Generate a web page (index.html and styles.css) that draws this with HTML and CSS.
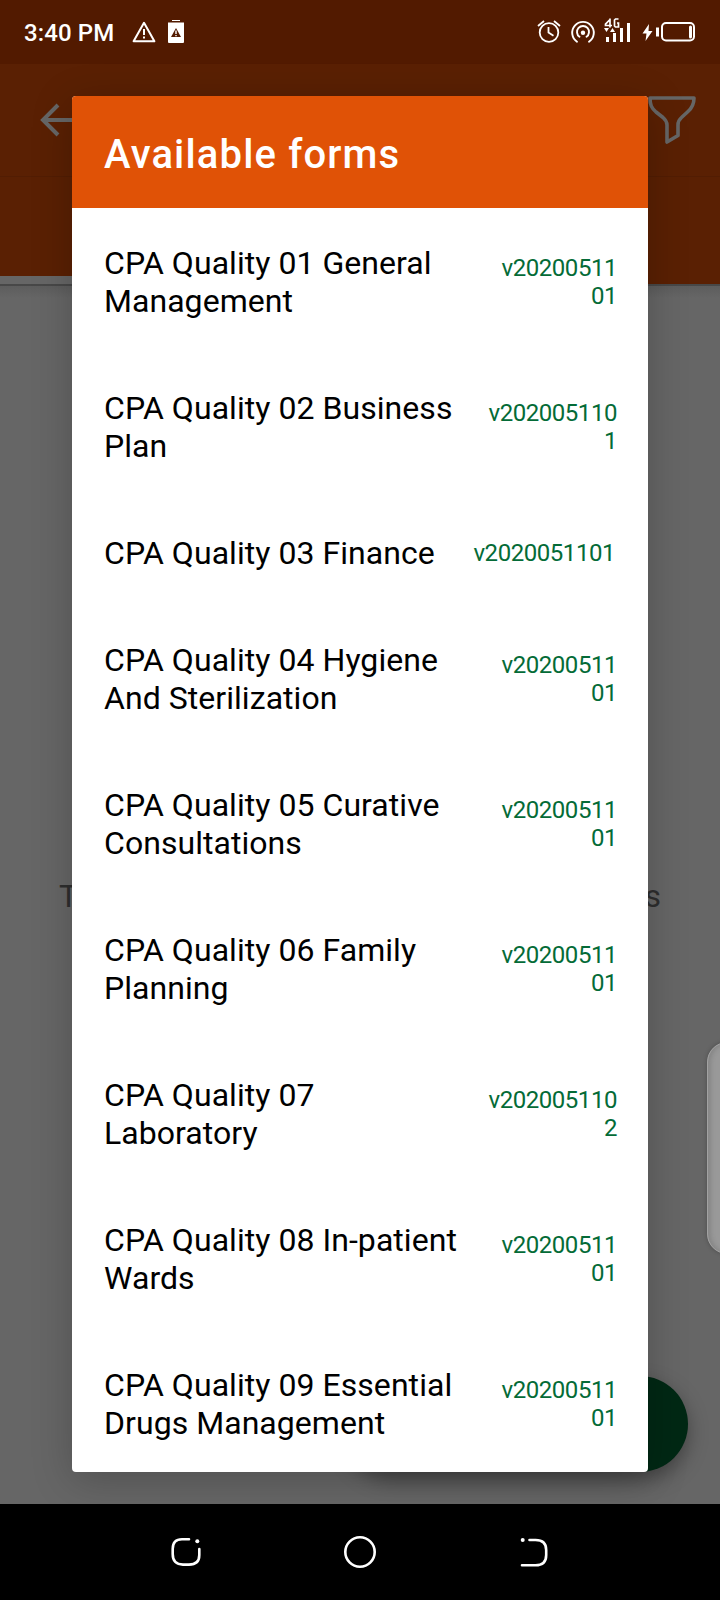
FILE: index.html
```html
<!DOCTYPE html>
<html lang="en">
<head>
<meta charset="utf-8">
<title>Available forms</title>
<link rel="stylesheet" href="styles.css">
</head>
<body>
<div class="screen">
  <header class="status">
    <span class="clock">3:40 PM</span>
    <svg class="warn" width="24" height="22" viewBox="0 0 24 22"><path d="M12 1.8 22.4 20.3H1.6Z" fill="none" stroke="#fff" stroke-width="2" stroke-linejoin="round"/><path d="M11 8h2v6h-2zM11 15.5h2v2h-2z" fill="#fff"/></svg>
    <svg class="batwarn" width="16" height="23" viewBox="0 0 16 23"><path d="M4 0h8v1H4zM0 2.500h16V22a1 1 0 0 1-1 1H1a1 1 0 0 1-1-1z" fill="#fff"/><path d="M8 8 13 17H3Z" fill="#521a00"/><path d="M7.300 10.500h1.400v3.500H7.300zM7.300 15h1.400v1.200H7.300z" fill="#fff"/></svg>
    <svg class="tray" width="164" height="32" viewBox="0 0 164 32" fill="none" stroke="#fff">
      <g stroke-width="1.800"><circle cx="13" cy="18.500" r="9.300"/><path d="M12.500 13V18.500l5 3.200M2 12l6-5M24 12l-6-5"/></g>
      <g stroke-width="1.900" stroke-linecap="round"><path d="M41 27.700A10.800 10.800 0 1 1 53 27.700M43.500 22.800A6 6 0 1 1 50.500 22.800"/></g>
      <circle cx="47" cy="18.700" r="2.200" fill="#fff" stroke="none"/>
      <path d="M74.500 5 69.500 10.200V11.500H76M74 4.500V13.500M82.500 5H79.500L78.500 6V12L79.500 13H82.500V9H81" stroke-width="1.700"/>
      <path d="M68 14h5l-2.500 4zM74 18h5l-2.500-4zM70 23h3v5h-3zM77 19h3v9h-3zM84 14h3v14h-3zM91 9h3v19h-3z" fill="#fff" stroke="none"/>
      <path d="M113 10 106.500 19.500H110.500L109.500 27 116.500 17H112.500ZM120 13.500h3v9h-3z" fill="#fff" stroke="none"/>
      <rect x="126" y="9" width="32" height="17.500" rx="4" stroke-width="2"/>
      <path d="M154.500 13v10" stroke-width="3" stroke-linecap="round"/>
    </svg>
  </header>
  <div class="appbar">
    <svg class="back" width="40" height="36" viewBox="0 0 40 36" fill="none" stroke="#666" stroke-width="4"><path d="M40 18H4M19 3 4 18 19 33"/></svg>
    <svg class="filter" width="50" height="50" viewBox="0 0 50 50" fill="none" stroke="#666" stroke-width="3.600" stroke-linejoin="round"><path d="M3 3H47C47 9 45.500 12.500 41 16.500L34.500 22.500Q31 25.500 31 30V40.500L20 47V30Q20 26 16 22.500L9 17C4.500 13 3 10 3 3Z"/></svg>
  </div>
  <div class="tabs"><div class="indicator"></div></div>
  <main class="page"><div class="empty"><span>T</span><span>s</span></div></main>
  <div class="fab"></div>
  <div class="edge"></div>
  <nav class="nav">
    <svg width="34" height="34" viewBox="0 0 34 34" fill="none" stroke="#fff" stroke-width="2.600" stroke-linecap="round"><path d="M20 4.300H13Q3.700 4.300 3.700 14V19Q3.700 29.600 14 29.600H20Q30.300 29.600 30.300 20V14"/><circle cx="28.300" cy="6.300" r="2" fill="#fff" stroke="none"/></svg>
    <svg width="34" height="34" viewBox="0 0 34 34" fill="none" stroke="#fff" stroke-width="2.600"><circle cx="17" cy="17" r="14.700"/></svg>
    <svg width="34" height="34" viewBox="0 0 34 34" fill="none" stroke="#fff" stroke-width="2.600" stroke-linecap="round"><path d="M12.500 5H18.500Q29.200 5 29.200 15V20Q29.200 30.300 18.500 30.300H5"/><circle cx="5.700" cy="5" r="2" fill="#fff" stroke="none"/></svg>
  </nav>
  <section class="dialog">
    <h1 class="title">Available forms</h1>
    <ul class="forms">
      <li class="form"><span class="name">CPA Quality 01 General<br>Management</span><span class="version">v20200511<br>01</span></li>
      <li class="form"><span class="name">CPA Quality 02 Business<br>Plan</span><span class="version">v202005110<br>1</span></li>
      <li class="form"><span class="name">CPA Quality 03 Finance</span><span class="version single">v2020051101</span></li>
      <li class="form"><span class="name">CPA Quality 04 Hygiene<br>And Sterilization</span><span class="version">v20200511<br>01</span></li>
      <li class="form"><span class="name">CPA Quality 05 Curative<br>Consultations</span><span class="version">v20200511<br>01</span></li>
      <li class="form"><span class="name">CPA Quality 06 Family<br>Planning</span><span class="version">v20200511<br>01</span></li>
      <li class="form"><span class="name">CPA Quality 07<br>Laboratory</span><span class="version">v202005110<br>2</span></li>
      <li class="form"><span class="name">CPA Quality 08 In-patient<br>Wards</span><span class="version">v20200511<br>01</span></li>
      <li class="form"><span class="name">CPA Quality 09 Essential<br>Drugs Management</span><span class="version">v20200511<br>01</span></li>
    </ul>
  </section>
</div>
</body>
</html>
```
FILE: styles.css
```css
* { box-sizing: border-box; }
body { margin: 0; font-family: Roboto, "Liberation Sans", sans-serif; }
svg { display: block; flex: none; }
.screen { position: relative; display: flex; flex-direction: column; width: 720px; height: 1600px; overflow: hidden; background: #666; }
.status { display: flex; height: 64px; background: #521a00; color: #fff; }
.clock { width: 108px; margin-left: 24px; font-size: 24px; font-weight: 500; line-height: 66px; letter-spacing: 0.1px; white-space: nowrap; }
.warn { margin-top: 21px; }
.batwarn { margin: 20px 0 0 12px; }
.tray { margin: 14px 20px 0 auto; }
.appbar { display: flex; justify-content: space-between; align-items: flex-start; height: 112px; padding: 32px 23px 0 39px; background: #5a2003; }
.back { margin-top: 6px; }
.filter { margin-top: -1px; }
.tabs { display: flex; align-items: flex-end; height: 108px; background: #5a2003; border-top: 1px solid #521d03; }
.indicator { width: 360px; height: 8px; background: #666; }
.page { flex: 1; padding: 591px 59px 0; border-top: 2px solid #484848; background: linear-gradient(#5d5d5d, #666 12px); }
.empty { display: flex; justify-content: space-between; color: #2e2e2e; font-size: 32px; line-height: 38px; }
.fab { position: absolute; left: 344px; top: 1376px; width: 344px; height: 96px; border-radius: 48px; background: #002814; box-shadow: 0 8px 20px rgba(0,0,0,.36); }
.edge { position: absolute; left: 707px; top: 1042px; width: 40px; height: 212px; border: 1px solid #a2a2a2; border-radius: 28px; background: #999; box-shadow: 0 0 4px rgba(0,0,0,.25), inset 3px 0 4px rgba(80,80,80,.25); }
.dialog { position: absolute; left: 72px; top: 96px; width: 576px; height: 1376px; overflow: hidden; border-radius: 4px; background: #fff; box-shadow: 0 8px 40px rgba(0,0,0,.22); }
.title { height: 112px; margin: 0; padding-left: 32px; background: #e05206; color: #fff; font-size: 40px; font-weight: 500; line-height: 118px; letter-spacing: 1.15px; }
.forms { margin: 0; padding: 0; list-style: none; }
.form { display: flex; justify-content: space-between; align-items: center; padding: 36px 31px 33px 32px; color: #000; }
.name { font-size: 32px; line-height: 38px; letter-spacing: 0.05px; white-space: nowrap; }
.version { color: #046b37; font-size: 24px; line-height: 28px; letter-spacing: -0.45px; text-align: right; white-space: nowrap; }
.version.single { margin-right: 2px; }
.nav { position: relative; display: flex; justify-content: space-between; height: 96px; padding: 31px 169px 0; background: #000; }
```
